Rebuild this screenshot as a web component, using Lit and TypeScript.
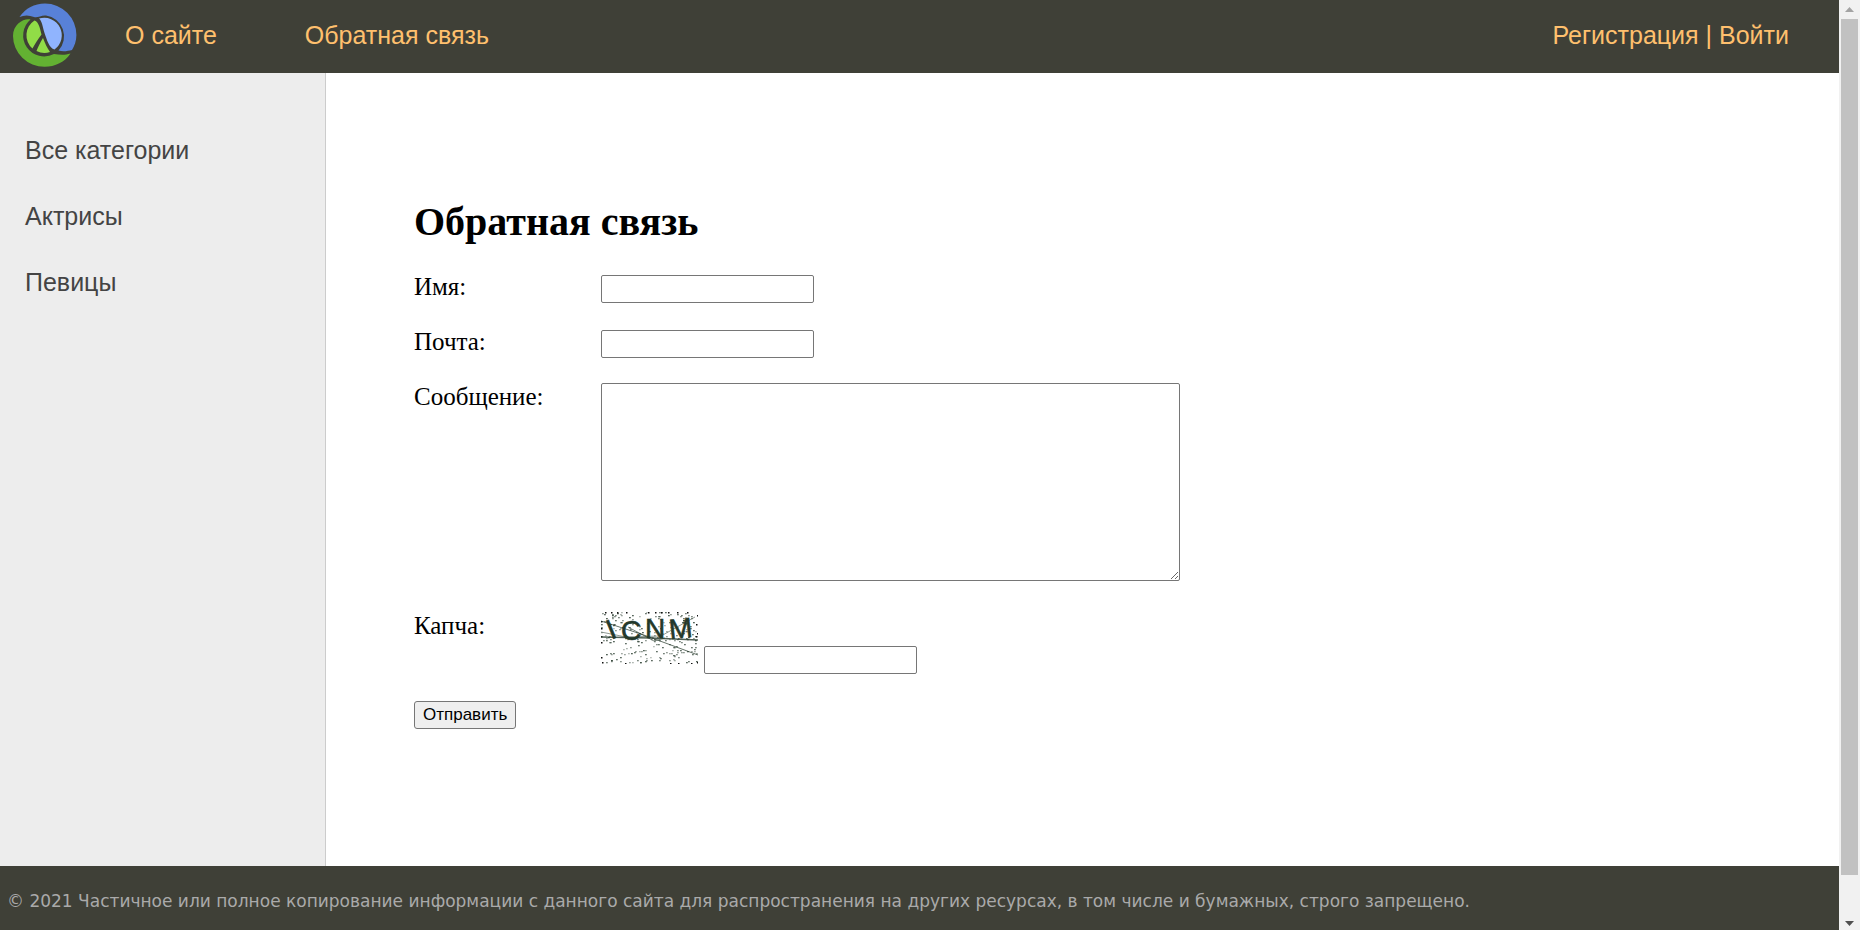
import { LitElement, html, css, svg } from "lit";
import { customElement } from "lit/decorators.js";

// Deterministic speckle for the captcha background.
const specks = (() => {
  let seed = 17;
  const next = () => (seed = (seed * 16807) % 2147483647) / 2147483647;
  return Array.from({ length: 230 }, () => ({
    x: Math.floor(next() * 96),
    y: Math.floor(next() * 51),
    o: 0.3 + next() * 0.5,
  }));
})();
const darkSpecks = [[4,0],[10,0],[16,0],[25,0],[47,0],[54,0],[60,0],[67,0],[76,0],[86,0],[96,3],[95,12],[96,21],[95,24],[0,9],[0,16],[0,24],[0,30],[0,45],[1,50],[24,51],[69,51],[77,51],[90,51],[96,50]];

@customElement("site-logo")
class SiteLogo extends LitElement {
  static styles = css`
    :host { display: block; }
    svg { display: block; }
  `;
  render() {
    return html`<svg width="64" height="64" viewBox="0 0 64 64" role="img" aria-label="Логотип">
      <path d="M6.5 14 A31.5 31.5 0 0 1 32 0.5 A31.5 31.5 0 0 1 63.4 32 C63.4 38 61.5 43 59 47 C55 48 50 49 45.5 47.5 A21 21 0 0 0 33 12.5 C28 12 25 15 21 14 C16 12 11 12 6.5 14 Z" fill="#5881d8"/>
      <path d="M17.5 16.5 C11 15 0 21 0 33 A31.5 31 0 0 0 31.5 63.8 C42 63.8 52 59 57.5 50.5 C51 52.5 46 51.5 41 51 A21 21 0 0 1 17.5 16.5 Z" fill="#63b132"/>
      <path d="M21.5 17.5 A17.5 17.5 0 0 0 19.5 45.5 C22 41 25 36 28.5 31.5 C27 26 26 19 21.5 17.5 Z" fill="#91dc47"/>
      <path d="M30 35 C27 40 25 44 23.5 48 A17.5 17.5 0 0 0 37 49 C34 45 32 40 30 35 Z" fill="#91dc47"/>
      <path d="M26 15.6 A17.5 17.5 0 0 1 41.5 46.5 C36 45 34 37 31.5 30 C29.5 24 29 18 26 15.6 Z" fill="#90b4fe"/>
    </svg>`;
  }
}

@customElement("captcha-picture")
class CaptchaPicture extends LitElement {
  static styles = css`
    :host { display: block; }
    svg { display: block; overflow: hidden; }
    .glyph { font-family: "Liberation Sans", Arial, sans-serif; font-size: 28px; fill: #24382a; stroke: #24382a; stroke-width: 0.6; }
  `;
  render() {
    return html`<svg width="97" height="52" viewBox="0 0 97 52" role="img" aria-label="Капча">
      ${specks.map((s) => svg`<rect x=${s.x} y=${s.y} width="1.8" height="1.3" fill="#24382a" opacity=${s.o}/>`)}
      ${darkSpecks.map(([x, y]) => svg`<rect x=${x} y=${y} width="1.5" height="1.5" fill="#111"/>`)}
      <g fill="none" stroke="#24382a">
        <path d="M0 9 L40 22 L97 43" opacity=".7"/>
        <path d="M0 25 L50 26 L97 28" stroke-width="1.6" opacity=".8"/>
        <path d="M0 20 L25 25 L60 24 L94 5" opacity=".5"/>
        <path d="M27 15 L53 29 L64 26" opacity=".6"/>
      </g>
      <text class="glyph" transform="rotate(-22 10 17)" x="6" y="27">I</text>
      <text class="glyph" x="20" y="28">C</text>
      <text class="glyph" x="44" y="26">N</text>
      <text class="glyph" transform="rotate(-6 81 16)" x="68" y="26">M</text>
    </svg>`;
  }
}

@customElement("page-scrollbar")
class PageScrollbar extends LitElement {
  static styles = css`
    :host { display: flex; flex-direction: column; background: #f1f1f1; }
    .arrow { display: block; width: 21px; height: 19px; }
    .track { flex: 1; padding: 0 2px; }
    .thumb { height: 96%; background: #c1c1c1; }
  `;
  render() {
    return html`
      <svg class="arrow" viewBox="0 0 21 19"><path d="M6 12 L10.5 7 L15 12 Z" fill="#a3a3a3"/></svg>
      <div class="track"><div class="thumb"></div></div>
      <svg class="arrow" viewBox="0 0 21 19"><path d="M6 10 L10.5 15 L15 10 Z" fill="#505050"/></svg>`;
  }
}

@customElement("app-root")
class AppRoot extends LitElement {
  static styles = css`
    :host { display: grid; grid-template-columns: 1fr 21px; min-height: 100vh; background: #fff; color: #000; }
    .page { display: flex; flex-direction: column; min-width: 0; }
    a { color: inherit; text-decoration: none; }
    .header {
      display: flex; align-items: center; box-sizing: border-box; height: 73px; padding: 0 50px 3px 13px;
      background: #3f4037; color: #ffc06e;
      font: 25px/28px "Liberation Sans", Arial, sans-serif;
    }
    .menu { display: flex; gap: 88px; margin-left: 48px; flex: 1; }
    .body { flex: 1; display: flex; }
    .sidebar {
      box-sizing: border-box; width: 326px; padding: 63px 25px; border-right: 1px solid #ccc;
      background: #ededed; color: #444;
      font: 25px/28px "Liberation Sans", Arial, sans-serif;
      display: flex; flex-direction: column; gap: 38px;
    }
    .content { flex: 1; min-width: 0; padding: 126px 88px 88px; font: 25px/28px "Liberation Serif", "Times New Roman", serif; }
    h1 { margin: 0 0 28px; font-size: 40px; line-height: 46px; font-weight: bold; }
    form { display: flex; flex-direction: column; align-items: flex-start; gap: 25px; }
    .row { display: grid; grid-template-columns: 187px auto; min-height: 30px; }
    .row.message { min-height: 204px; }
    .row.captcha { min-height: 64px; }
    .row.captcha .field { display: flex; gap: 6px; }
    .row.captcha input { margin-top: 34px; }
    input, textarea { box-sizing: border-box; border: 1px solid #767676; border-radius: 2px; background: #fff; padding: 1px 3px; font: 17px/20px "Liberation Sans", Arial, sans-serif; }
    input { display: block; width: 213px; height: 28px; margin: 2px 0 0; }
    textarea { display: block; width: 579px; height: 198px; margin: 0; resize: both; }
    button {
      height: 28px; margin: 0; padding: 0 8px; border: 1px solid #767676; border-radius: 3px;
      background: #efefef; color: #000; font: 17px/20px "Liberation Sans", Arial, sans-serif;
    }
    .footer { padding: 24px 7px 18px; background: #3f4037; color: #aaa; font: 17px/22px "DejaVu Sans", Verdana, sans-serif; }
    .footer p { margin: 0; }
  `;
  render() {
    return html`
      <div class="page">
        <header class="header">
          <site-logo></site-logo>
          <nav class="menu"><a href="#about">О сайте</a><a href="#contact">Обратная связь</a></nav>
          <div><a href="#register">Регистрация</a> | <a href="#login">Войти</a></div>
        </header>
        <div class="body">
          <nav class="sidebar">
            <a href="#all">Все категории</a><a href="#actresses">Актрисы</a><a href="#singers">Певицы</a>
          </nav>
          <main class="content">
            <h1>Обратная связь</h1>
            <form @submit=${(e: Event) => e.preventDefault()}>
              <div class="row"><label for="name">Имя:</label><input id="name" type="text"></div>
              <div class="row"><label for="email">Почта:</label><input id="email" type="email"></div>
              <div class="row message"><label for="message">Сообщение:</label><textarea id="message"></textarea></div>
              <div class="row captcha">
                <label for="captcha">Капча:</label>
                <div class="field"><captcha-picture></captcha-picture><input id="captcha" type="text"></div>
              </div>
              <button type="submit">Отправить</button>
            </form>
          </main>
        </div>
        <footer class="footer">
          <p>© 2021 Частичное или полное копирование информации с данного сайта для распространения на других ресурсах, в том числе и бумажных, строго запрещено.</p>
        </footer>
      </div>
      <page-scrollbar aria-hidden="true"></page-scrollbar>`;
  }
}
